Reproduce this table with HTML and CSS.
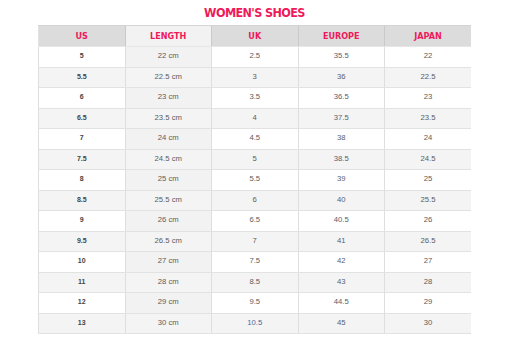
FILE: index.html
```html
<!DOCTYPE html>
<html lang="en">
<head>
  <meta charset="UTF-8" />
  <title>Women's Shoes Size Chart</title>
  <link rel="stylesheet" href="styles.css">
</head>
<body>
  <div class="chart">
    <h2 class="title">WOMEN'S SHOES</h2>
    <table class="sizes">
      <thead>
        <tr><th>US</th><th class="len">LENGTH</th><th>UK</th><th>EUROPE</th><th>JAPAN</th></tr>
      </thead>
      <tbody>
        <tr><td class="us">5</td><td class="len">22 cm</td><td>2.5</td><td class="eu">35.5</td><td>22</td></tr>
        <tr><td class="us">5.5</td><td class="len">22.5 cm</td><td>3</td><td class="eu">36</td><td>22.5</td></tr>
        <tr><td class="us">6</td><td class="len">23 cm</td><td>3.5</td><td class="eu">36.5</td><td>23</td></tr>
        <tr><td class="us">6.5</td><td class="len">23.5 cm</td><td>4</td><td class="eu">37.5</td><td>23.5</td></tr>
        <tr><td class="us">7</td><td class="len">24 cm</td><td>4.5</td><td class="eu">38</td><td>24</td></tr>
        <tr><td class="us">7.5</td><td class="len">24.5 cm</td><td>5</td><td class="eu">38.5</td><td>24.5</td></tr>
        <tr><td class="us">8</td><td class="len">25 cm</td><td>5.5</td><td class="eu">39</td><td>25</td></tr>
        <tr><td class="us">8.5</td><td class="len">25.5 cm</td><td>6</td><td class="eu">40</td><td>25.5</td></tr>
        <tr><td class="us">9</td><td class="len">26 cm</td><td>6.5</td><td class="eu">40.5</td><td>26</td></tr>
        <tr><td class="us">9.5</td><td class="len">26.5 cm</td><td>7</td><td class="eu">41</td><td>26.5</td></tr>
        <tr><td class="us">10</td><td class="len">27 cm</td><td>7.5</td><td class="eu">42</td><td>27</td></tr>
        <tr><td class="us">11</td><td class="len">28 cm</td><td>8.5</td><td class="eu">43</td><td>28</td></tr>
        <tr><td class="us">12</td><td class="len">29 cm</td><td>9.5</td><td class="eu">44.5</td><td>29</td></tr>
        <tr><td class="us">13</td><td class="len">30 cm</td><td class="uk-blue">10.5</td><td class="eu">45</td><td>30</td></tr>
      </tbody>
    </table>
  </div>
</body>
</html>
```

FILE: styles.css
```css
* { box-sizing: border-box; margin: 0; padding: 0; }
body {
  background: #fff;
  font-family: "Liberation Sans", Arial, sans-serif;
  color: #555;
}
.chart {
  width: 433px;
  margin-left: 38px;
  padding-top: 5px;
}
.title {
  text-align: center;
  font-family: "DejaVu Sans Condensed", "DejaVu Sans", sans-serif;
  font-weight: bold;
  font-size: 12.5px;
  line-height: 16px;
  color: #ee1a5a;
  letter-spacing: -0.6px;
  margin-bottom: 4px;
}
.sizes {
  width: 433px;
  border-collapse: collapse;
  table-layout: fixed;
}
.sizes th {
  height: 21px;
  background: #dcdcdc;
  color: #ee1a5a;
  font-family: "DejaVu Sans Condensed", "DejaVu Sans", sans-serif;
  font-weight: bold;
  font-size: 9px;
  border-left: 1px solid #c9c9c9;
  border-top: 1px solid #d4d4d4;
  border-bottom: 1px solid #e6e6e6;
}
.sizes th:first-child { border-left-color: #e2e2e2; }
.sizes th.len { background: #f2f2f2; }
.sizes td {
  height: 20.5px;
  text-align: center;
  font-size: 7.7px;
  color: #5c5c5c;
  border-left: 1px solid #dedede;
  border-bottom: 1px solid #e2e2e2;
  padding-bottom: 2px;
}
.sizes tbody tr:nth-child(even) td { background: #f4f4f4; }
.sizes td.len { background: #f2f2f2; }
.sizes td.us { font-weight: bold; color: #444; font-size: 7px; }
.sizes td.eu { color: #5a6070; }
.sizes td.uk-blue { color: #4a6aa0; }
```
